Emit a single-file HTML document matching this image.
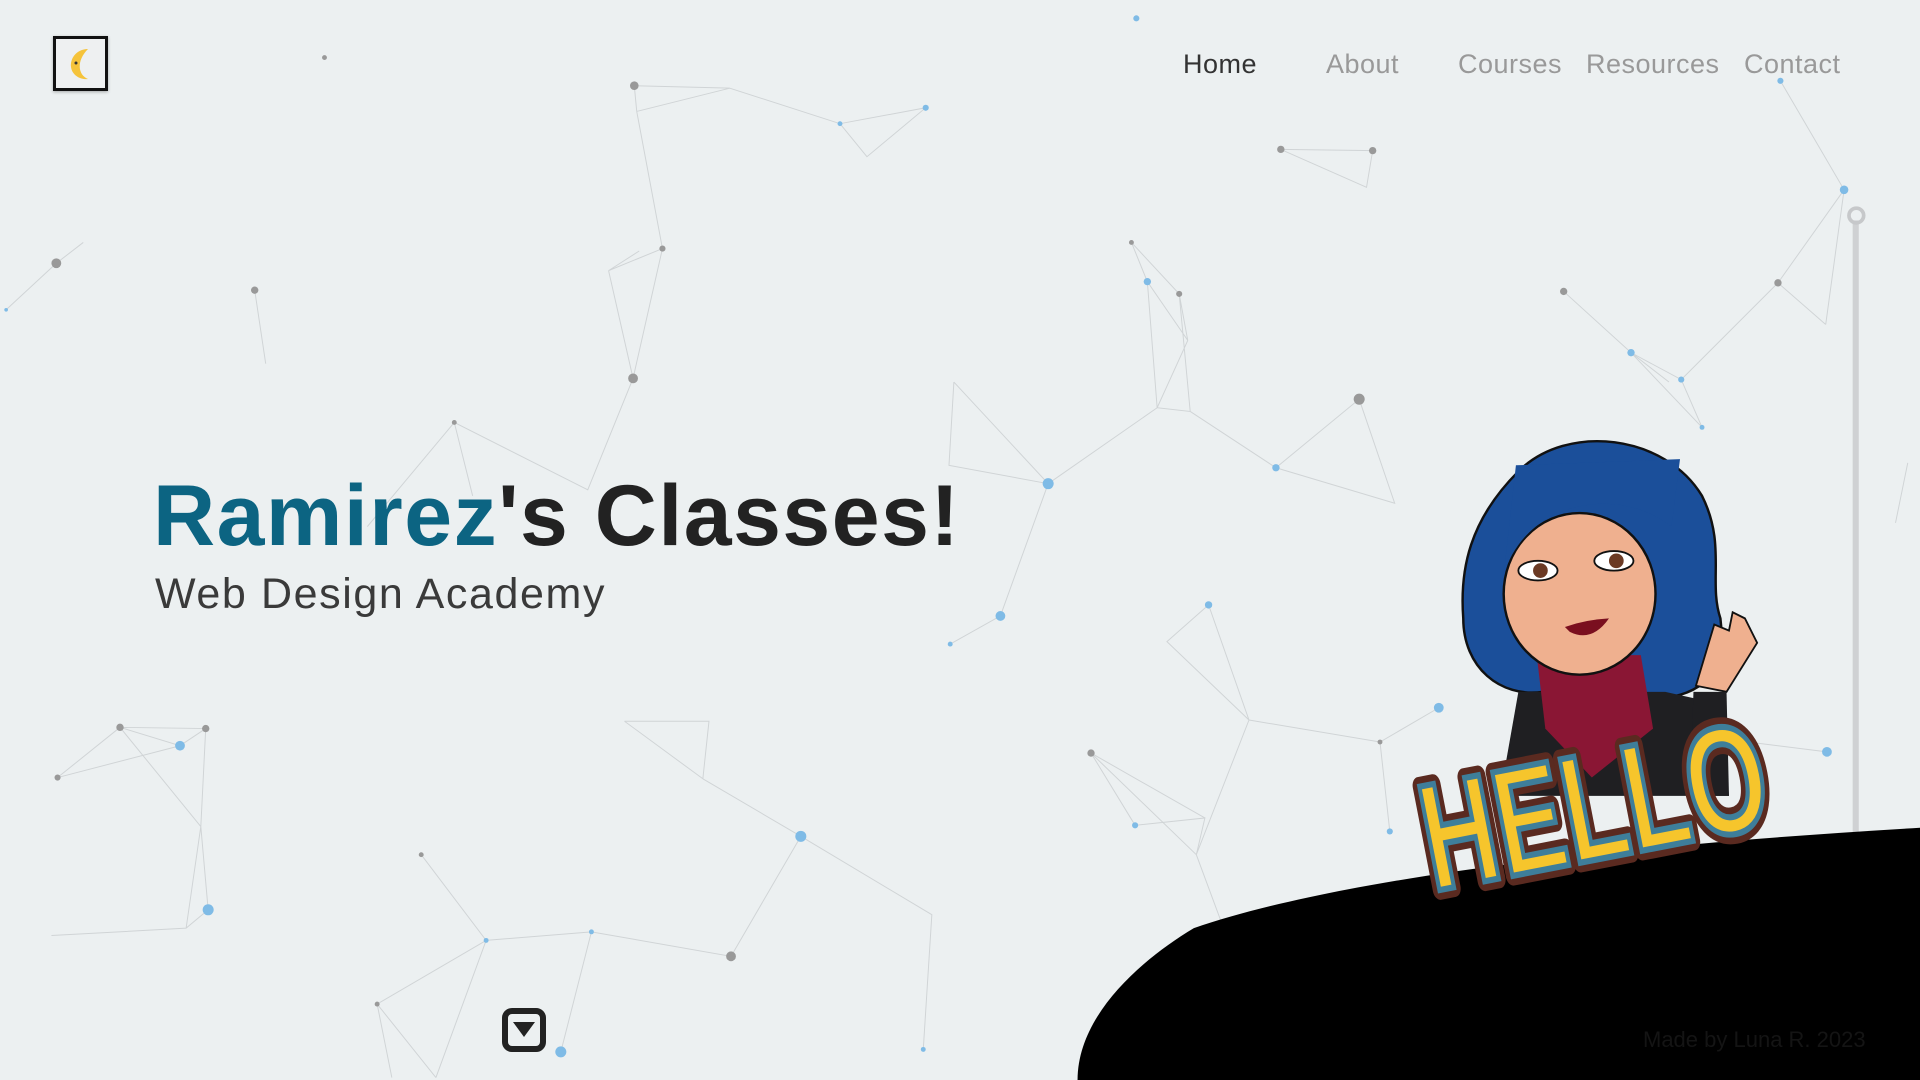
<!DOCTYPE html>
<html><head><meta charset="utf-8"><style>
html,body{margin:0;padding:0;width:1920px;height:1080px;overflow:hidden;background:#ecf0f1;font-family:"Liberation Sans",sans-serif}
svg.bg{position:absolute;left:0;top:0}
.logo{position:absolute;left:53px;top:36px;width:49px;height:49px;border:3px solid #111;background:#eef0f1;box-shadow:0 1px 3px rgba(0,0,0,.3)}
nav a{position:absolute;top:49px;font-size:27px;color:#999;text-decoration:none;letter-spacing:.5px}
h1{position:absolute;left:153px;top:467px;margin:0;font-size:86px;font-weight:bold;color:#222;letter-spacing:1.5px;white-space:nowrap}
h1 span{color:#0c6482}
.sub{position:absolute;left:155px;top:570px;font-size:43px;color:#3a3a3a;letter-spacing:1.6px}
.foot{position:absolute;left:1643px;top:1027px;font-size:22px;color:#141414}
</style></head><body>
<svg class="bg" width="1920" height="1080" viewBox="0 0 1568 882">
<g stroke="#d0d4d6" stroke-width="0.8" fill="none">
<path d="M518 70L596 72L520 91L518 70M596 72L686 101L756 88L708 128L686 101M520 91L541 203L497 221L522 205M541 203L517 309L497 221M517 309L480 400L371 345L386 405M371 345L300 430M46 215L5 253M46 215L68 198M208 237L217 297M1046 122L1121 123L1116 153L1046 122M924 198L937 230L970 278L963 240L924 198M970 278L945 333L972 336L963 240M937 230L945 333M972 336L1042 382L1110 326L1139 411L1042 382M945 333L856 395M779 312L775 380L856 395L779 312M856 395L817 503L776 526M1454 66L1506 155L1452 231L1491 265M1277 238L1332 288L1373 310L1390 349L1332 288M1452 231L1373 310M1506 155L1491 265M1363 312L1332 288M1558 378L1548 427M987 494L953 524L1020 588L987 494M1020 588L1127 606L1175 578M1127 606L1135 679M1020 588L977 698L891 615L927 674L984 668L977 698M891 615L984 668M977 698L1000 760M98 594L168 595L147 609L98 594L47 635L147 609M98 594L164 675L170 743L152 758L42 764M168 595L164 675L152 758M510 589L579 589L574 636L510 589M574 636L654 683L761 747L754 857M654 683L597 781L483 761L397 768L344 698M397 768L308 820L356 880M483 761L458 859M397 768L356 880M308 820L320 880M1380 600L1492 614"/>
</g>
<g fill="#999">
<circle cx="518" cy="70" r="3.5"/><circle cx="541" cy="203" r="2.5"/><circle cx="517" cy="309" r="4"/><circle cx="46" cy="215" r="4"/><circle cx="208" cy="237" r="3"/><circle cx="1046" cy="122" r="3"/><circle cx="1121" cy="123" r="3"/><circle cx="963" cy="240" r="2.5"/><circle cx="1110" cy="326" r="4.5"/><circle cx="1277" cy="238" r="3"/><circle cx="1452" cy="231" r="3"/><circle cx="98" cy="594" r="3"/><circle cx="168" cy="595" r="3"/><circle cx="47" cy="635" r="2.5"/><circle cx="597" cy="781" r="4"/><circle cx="891" cy="615" r="3"/><circle cx="265" cy="47" r="2"/><circle cx="924" cy="198" r="2"/><circle cx="371" cy="345" r="2"/><circle cx="1127" cy="606" r="2"/><circle cx="344" cy="698" r="2"/><circle cx="308" cy="820" r="2"/>
</g>
<g fill="#7fbbe6">
<circle cx="856" cy="395" r="4.5"/><circle cx="817" cy="503" r="4"/><circle cx="1042" cy="382" r="3"/><circle cx="937" cy="230" r="3"/><circle cx="1506" cy="155" r="3.5"/><circle cx="1454" cy="66" r="2.5"/><circle cx="1332" cy="288" r="3"/><circle cx="1373" cy="310" r="2.5"/><circle cx="987" cy="494" r="3"/><circle cx="1175" cy="578" r="4"/><circle cx="1492" cy="614" r="4"/><circle cx="147" cy="609" r="4"/><circle cx="170" cy="743" r="4.5"/><circle cx="654" cy="683" r="4.5"/><circle cx="458" cy="859" r="4.5"/><circle cx="927" cy="674" r="2.5"/><circle cx="1135" cy="679" r="2.5"/><circle cx="928" cy="15" r="2.5"/><circle cx="686" cy="101" r="2"/><circle cx="756" cy="88" r="2.5"/><circle cx="483" cy="761" r="2"/><circle cx="397" cy="768" r="2"/><circle cx="754" cy="857" r="2"/><circle cx="776" cy="526" r="2"/><circle cx="1390" cy="349" r="2"/><circle cx="5" cy="253" r="1.5"/>
</g>
<rect x="1513" y="180" width="5" height="526" fill="#cfd1d3"/>
<circle cx="1516" cy="176" r="6" fill="none" stroke="#c6c8ca" stroke-width="3"/>
<path d="M880 882C880 830 930 785 975 758C1100 715 1330 690 1568 676L1568 882Z" fill="#000"/>
<g>
<path d="M1240 385C1280 345 1360 355 1390 405C1410 445 1395 475 1405 505C1410 545 1395 565 1360 570C1340 575 1320 565 1310 560L1260 565C1225 570 1195 545 1195 505C1192 465 1200 425 1240 385Z" fill="#1b4f9a" stroke="#111" stroke-width="2"/>
<path d="M1240 565L1360 565L1405 575L1412 650L1225 650Z" fill="#1f1f22"/>
<path d="M1255 535L1340 535L1350 595L1300 635L1262 595Z" fill="#8a1634"/>
<ellipse cx="1290" cy="485" rx="62" ry="66" fill="#efb08f" stroke="#111" stroke-width="2"/>
<path d="M1228 470C1245 410 1320 395 1365 430L1372 375L1238 380Z" fill="#1b4f9a"/>
<ellipse cx="1256" cy="466" rx="16" ry="8" fill="#fff" stroke="#111" stroke-width="1.5"/><circle cx="1258" cy="466" r="6" fill="#6b3a24"/>
<ellipse cx="1318" cy="458" rx="16" ry="8" fill="#fff" stroke="#111" stroke-width="1.5"/><circle cx="1320" cy="458" r="6" fill="#6b3a24"/>
<path d="M1278 512Q1295 506 1314 505Q1300 525 1282 516Z" fill="#7a0f1f"/>
<path d="M1385 560L1400 510L1412 515L1415 500L1425 505L1435 525L1410 565Z" fill="#efb08f" stroke="#111" stroke-width="1.5"/>
<path d="M1383 565L1410 565L1412 650L1380 650Z" fill="#1f1f22"/>
<g transform="translate(1170 728) rotate(-11)" font-family="Liberation Sans" font-weight="bold" font-size="125">
<text x="0" y="0" fill="#f6c52c" stroke="#5a2a20" stroke-width="16" stroke-linejoin="round" textLength="285" lengthAdjust="spacingAndGlyphs">HELLO</text>
<text x="0" y="0" fill="#f6c52c" stroke="#3e7e9a" stroke-width="5" textLength="285" lengthAdjust="spacingAndGlyphs">HELLO</text>
</g>
</g>
</svg>
<div class="logo"><svg width="49" height="49" viewBox="0 0 49 49"><path d="M32 10C20 10 14 20 15 28C16 36 24 41 32 40C22 36 20 22 32 10Z" fill="#f5c33b"/><circle cx="20" cy="24" r="1.5" fill="#333"/></svg></div>
<nav><a style="left:1183px;color:#333">Home</a><a style="left:1326px">About</a><a style="left:1458px">Courses</a><a style="left:1586px">Resources</a><a style="left:1744px">Contact</a></nav>
<h1><span>Ramirez</span>'s Classes!</h1>
<div class="sub">Web Design Academy</div>
<svg style="position:absolute;left:501px;top:1007px" width="46" height="46" viewBox="0 0 46 46"><rect x="4" y="4" width="38" height="38" rx="7" fill="none" stroke="#222" stroke-width="6"/><path d="M12 15L34 15L23 30Z" fill="#222"/></svg>
<div class="foot">Made by Luna R. 2023</div>
</body></html>
